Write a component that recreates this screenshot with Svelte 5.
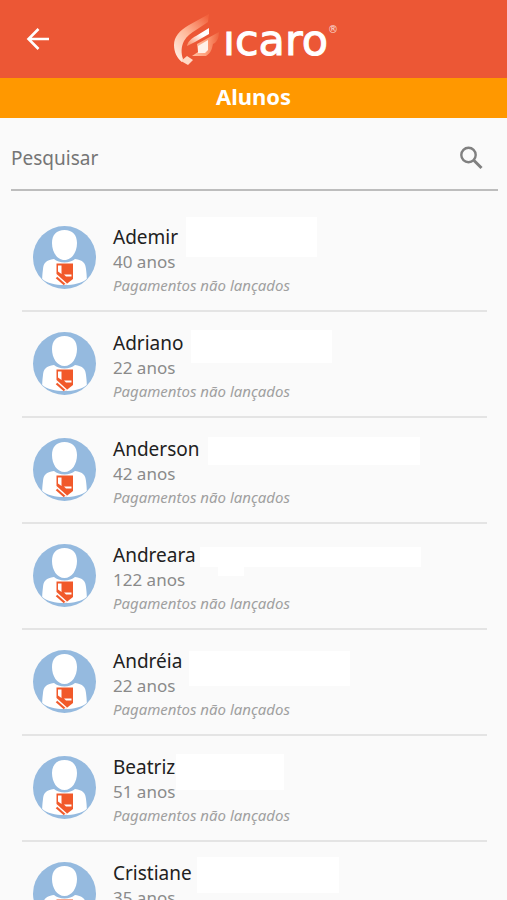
<script>
  const students = [
    { name: 'Ademir', age: 40, masks: [{ x: 164, y: 11, w: 131, h: 40 }] },
    { name: 'Adriano', age: 22, masks: [{ x: 169, y: 18, w: 141, h: 33 }] },
    { name: 'Anderson', age: 42, masks: [{ x: 186, y: 19, w: 212, h: 28 }] },
    {
      name: 'Andreara',
      age: 122,
      masks: [
        { x: 178, y: 23, w: 221, h: 20 },
        { x: 196, y: 42, w: 26, h: 10 }
      ]
    },
    { name: 'Andréia', age: 22, masks: [{ x: 167, y: 21, w: 161, h: 35 }] },
    { name: 'Beatriz', age: 51, masks: [{ x: 154, y: 18, w: 108, h: 36 }] },
    { name: 'Cristiane', age: 35, masks: [{ x: 175, y: 15, w: 142, h: 36 }] }
  ];

  let query = $state('');
  const visible = $derived(
    students.filter((s) => s.name.toLowerCase().includes(query.toLowerCase()))
  );
</script>

<div class="app">
  <header class="bar">
    <button class="back" type="button" aria-label="Voltar">
      <svg width="24" height="24" viewBox="0 0 24 24" fill="none" stroke="#fff" stroke-width="2.6">
        <path d="M23 12H3M12.500 2 2.500 12l10 10" />
      </svg>
    </button>
    <div class="brand">
      <svg width="48" height="54" viewBox="0 0 48 54" aria-hidden="true">
        <defs>
          <linearGradient id="wing" x1="0.1" y1="1" x2="0.9" y2="0">
            <stop offset="0" stop-color="#fff0e6" />
            <stop offset="0.5" stop-color="#ffb899" />
            <stop offset="1" stop-color="#f2613c" />
          </linearGradient>
          <linearGradient id="feather" gradientUnits="userSpaceOnUse" x1="18" y1="0" x2="47" y2="0">
            <stop offset="0" stop-color="#ffc2a6" />
            <stop offset="0.5" stop-color="#ffa27d" />
            <stop offset="1" stop-color="#ee5e39" />
          </linearGradient>
          <linearGradient id="beam" x1="0" y1="1" x2="1" y2="0">
            <stop offset="0.1" stop-color="#fb9a74" />
            <stop offset="0.65" stop-color="#fff" />
          </linearGradient>
        </defs>
        <path fill="url(#wing)" d="M36 1 16 12C6 18 1 24 1 32c0 7 3 13 8 17l1-3C8 40 8 34 11 28c3-5 7-8 12-11l12-8z" />
        <path fill="#ffd9c5" d="m8 48 6-5 6 4-5 5z" />
        <path fill="url(#beam)" d="M14 33c1-5 5-8 9-10l13-8v6L22 29z" />
        <path fill="url(#feather)" d="M24 31 46 19c0 6-2 10-6 12-1 5-2 9-7 12H19l6-4z" />
        <path fill="#fff1e8" d="m25 33 10-6v10l-3 3h-7z" />
      </svg>
      <span class="word">ıcaro</span><span class="reg">®</span>
    </div>
  </header>

  <h1>Alunos</h1>

  <main>
    <div class="search">
      <input type="text" placeholder="Pesquisar" aria-label="Pesquisar" bind:value={query} />
      <button type="button" aria-label="Buscar">
        <svg width="24" height="24" viewBox="0 0 24 24" fill="none" stroke="#808080">
          <circle cx="9.500" cy="9" r="7.200" stroke-width="2.400" />
          <path d="m15 14.500 7.500 7.500" stroke-width="3" />
        </svg>
      </button>
    </div>

    <ul>
      {#each visible as s (s.name)}
        <li>
          {#each s.masks as m}
            <span
              class="mask"
              style="left:{m.x}px;top:{m.y}px;width:{m.w}px;height:{m.h}px"
            ></span>
          {/each}
          <svg class="avatar" width="63" height="63" viewBox="0 0 63 63" aria-hidden="true">
            <circle cx="31.500" cy="31.500" r="31.500" fill="#95badf" />
            <path fill="#fff" d="M31.500 4c8 0 12.500 5 12.500 13 0 9-5 17-12.500 17S19 26 19 17c0-8 4.500-13 12.500-13zM21 33c5 4.500 16 4.500 21 0 8 1 10.500 4 11 10 .4 3 .8 7 .8 10-5 4-13 6-22.300 6S14 57 9.200 53c0-3 .4-7 .8-10 .5-6 3-9 11-10z" />
            <path fill="#f1592a" d="M23.500 37.500H40V53l-7 5.500-9.500-9z" />
            <path fill="#fff" d="M25 39.500h3.500V48L25 45.500zM31 48.500h7.500v2H33z" />
            <path fill="none" stroke="#fff" stroke-width="1.600" d="m23 48.500 10.500 9.500" />
            <path fill="none" stroke="#f1592a" stroke-width="2.200" d="m23.500 51.500 8 7" />
          </svg>
          <div class="info">
            <span class="name">{s.name}</span>
            <span class="age">{s.age} anos</span>
            <em>Pagamentos não lançados</em>
          </div>
        </li>
      {/each}
    </ul>
  </main>
</div>

<style>
  :global(body) {
    margin: 0;
    background: #fafafa;
  }
  .app {
    height: 100vh;
    overflow: hidden;
    font-family: 'Noto Sans', 'Open Sans', sans-serif;
    background: #fafafa;
  }
  .bar {
    display: grid;
    grid-template-columns: 76px 1fr 72px;
    align-items: center;
    height: 78px;
    background: #ec5735;
  }
  button {
    display: flex;
    padding: 0;
    border: 0;
    background: none;
    cursor: pointer;
  }
  .back {
    justify-self: center;
  }
  .brand {
    display: flex;
    align-items: center;
    justify-content: center;
    padding-top: 2px;
    color: #fff;
  }
  .word {
    margin-left: 2px;
    font: 43px/48px 'DejaVu Sans', sans-serif;
    -webkit-text-stroke: 1px #fff;
  }
  .reg {
    align-self: flex-start;
    padding-top: 11px;
    font: 10px/12px 'DejaVu Sans', sans-serif;
    opacity: 0.8;
  }
  h1 {
    margin: 0;
    padding-bottom: 4px;
    font-size: 22px;
    font-weight: 700;
    line-height: 36px;
    text-align: center;
    color: #fff;
    background: #ff9800;
  }
  .search {
    display: flex;
    align-items: center;
    height: 62px;
    margin: 0 9px 0 11px;
    padding: 9px 15px 0 0;
    border-bottom: 2px solid #bdbdbd;
  }
  input {
    flex: 1;
    min-width: 0;
    height: 40px;
    padding: 0;
    border: 0;
    outline: 0;
    background: none;
    font: 19px/28px 'Noto Sans', 'Open Sans', sans-serif;
    color: #212121;
  }
  input::placeholder {
    color: #757575;
    opacity: 1;
  }
  ul {
    margin: 15px 20px 0 22px;
    padding: 0;
    list-style: none;
  }
  li {
    position: relative;
    display: flex;
    gap: 17px;
    box-sizing: border-box;
    height: 106px;
    padding: 20px 0 0 11px;
    border-bottom: 2px solid #e4e4e4;
  }
  .mask {
    position: absolute;
    background: #fff;
  }
  .avatar {
    flex: none;
  }
  .info {
    position: relative;
    display: flex;
    flex-direction: column;
    color: #8a8a8a;
  }
  .name {
    margin-top: -2px;
    font-size: 19px;
    line-height: 26px;
    color: #212121;
  }
  .age {
    font-size: 17px;
    line-height: 24px;
  }
  em {
    font-size: 15px;
    line-height: 22px;
    color: #a0a0a0;
  }
</style>
